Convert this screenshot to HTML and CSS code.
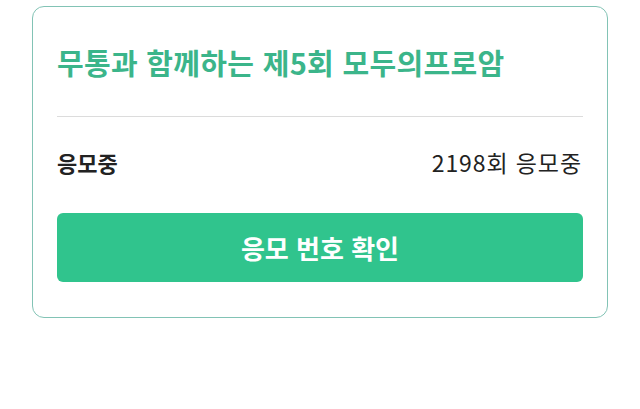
FILE: index.html
```html
<!DOCTYPE html>
<html lang="ko">
<head>
<meta charset="utf-8">
<link rel="stylesheet" href="styles.css">
</head>
<body>
<div class="card">
  <h1 class="title">무통과 함께하는 제5회 모두의프로암</h1>
  <div class="divider"></div>
  <div class="row">
    <span class="label">응모중</span>
    <span class="value">2198회 응모중</span>
  </div>
  <button class="btn">응모 번호 확인</button>
</div>
</body>
</html>
```
FILE: styles.css
```css
html, body {
  margin: 0;
  padding: 0;
  background: #ffffff;
}
body {
  font-family: "Noto Sans CJK KR", "Noto Sans", sans-serif;
  padding: 6px 32px 0;
}
.card {
  border: 1px solid #82c3b5;
  border-radius: 12px;
  padding: 0 24px 35px;
}
.title {
  margin: 0;
  padding-top: 37px;
  font-size: 29px;
  line-height: 36px;
  font-weight: 700;
  color: #3bb58a;
  letter-spacing: 0.3px;
  white-space: nowrap;
}
.divider {
  margin-top: 36px;
  height: 1px;
  background: #dcdcdc;
}
.row {
  display: flex;
  justify-content: space-between;
  align-items: center;
  margin-top: 31px;
  height: 28px;
  font-size: 22px;
  color: #222222;
}
.label {
  font-weight: 700;
}
.value {
  font-weight: 400;
  font-size: 23px;
  letter-spacing: 0.9px;
  margin-right: 1px;
}
.btn {
  display: block;
  width: 100%;
  margin-top: 37px;
  height: 69px;
  border: 0;
  border-radius: 6px;
  background: #30c48d;
  color: #ffffff;
  font-family: "Noto Sans CJK KR", "Noto Sans", sans-serif;
  font-size: 26px;
  font-weight: 700;
  padding: 0;
}
```
